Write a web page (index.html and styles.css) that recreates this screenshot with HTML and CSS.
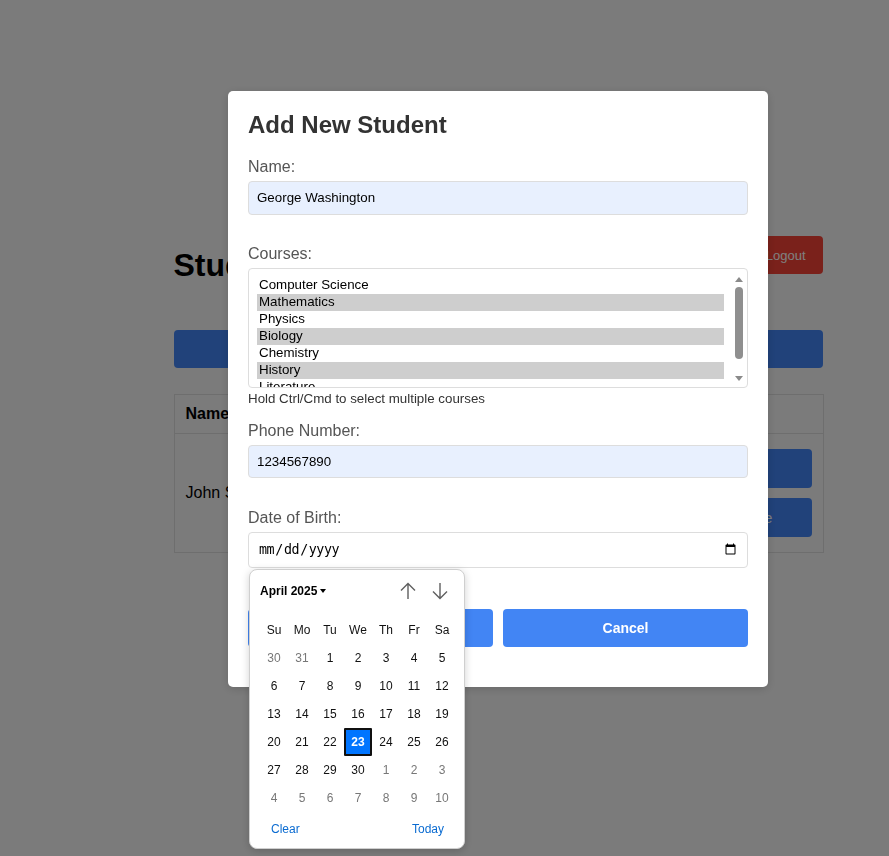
FILE: index.html
```html
<!DOCTYPE html>
<html lang="en">
<head>
<meta charset="utf-8">
<title>Student Management</title>
<link rel="stylesheet" href="styles.css">
</head>
<body>
<div class="page">
  <div class="container">
    <header class="top">
      <h1>Student Management</h1>
      <button class="btn-logout">Logout</button>
    </header>
    <button class="btn-add">Add New Student</button>
    <table class="students">
      <colgroup>
        <col class="c-name"><col class="c-email"><col class="c-courses"><col class="c-phone"><col class="c-dob"><col class="c-actions">
      </colgroup>
      <thead>
        <tr><th>Name</th><th>Email</th><th>Courses</th><th>Phone</th><th>DOB</th><th class="col-actions">Actions</th></tr>
      </thead>
      <tbody>
        <tr>
          <td>John Smith</td><td>john@mail.com</td><td>Physics</td><td>555123</td><td>2001</td>
          <td class="col-actions"><button class="btn-row">Edit</button><button class="btn-row">Delete</button></td>
        </tr>
      </tbody>
    </table>
  </div>
</div>

<div class="overlay">
  <div class="modal">
    <h2>Add New Student</h2>
    <div class="form-group">
      <label>Name:</label>
      <input class="field filled" type="text" value="George Washington">
    </div>
    <div class="form-group">
      <label>Courses:</label>
      <div class="listbox" role="listbox" aria-multiselectable="true">
        <div class="options">
          <div class="opt">Computer Science</div>
          <div class="opt sel">Mathematics</div>
          <div class="opt">Physics</div>
          <div class="opt sel">Biology</div>
          <div class="opt">Chemistry</div>
          <div class="opt sel">History</div>
          <div class="opt">Literature</div>
          <div class="opt">Art</div>
          <div class="opt">Music</div>
        </div>
        <div class="scrollbar">
          <span class="arrow-up"></span>
          <span class="thumb"></span>
          <span class="arrow-down"></span>
        </div>
      </div>
      <small class="hint">Hold Ctrl/Cmd to select multiple courses</small>
    </div>
    <div class="form-group group-phone">
      <label>Phone Number:</label>
      <input class="field filled" type="text" value="1234567890">
    </div>
    <div class="form-group">
      <label>Date of Birth:</label>
      <div class="date-wrap">
        <input class="field date" type="date">
        <div class="picker">
          <div class="picker-head">
            <span class="month">April 2025 <span class="caret"></span></span>
            <span class="nav">
              <svg width="24" height="20" viewBox="0 0 24 20"><path d="M12 2.5V18M5 9.5L12 2.5L19 9.5" fill="none" stroke="#5f5f5f" stroke-width="1.4"/></svg>
              <svg width="24" height="20" viewBox="0 0 24 20"><path d="M12 2V17.5M5 10.5L12 17.5L19 10.5" fill="none" stroke="#5f5f5f" stroke-width="1.4"/></svg>
            </span>
          </div>
          <div class="grid">
            <span class="dn">Su</span><span class="dn">Mo</span><span class="dn">Tu</span><span class="dn">We</span><span class="dn">Th</span><span class="dn">Fr</span><span class="dn">Sa</span>
            <span class="o">30</span><span class="o">31</span><span>1</span><span>2</span><span>3</span><span>4</span><span>5</span>
            <span>6</span><span>7</span><span>8</span><span>9</span><span>10</span><span>11</span><span>12</span>
            <span>13</span><span>14</span><span>15</span><span>16</span><span>17</span><span>18</span><span>19</span>
            <span>20</span><span>21</span><span>22</span><span class="sel">23</span><span>24</span><span>25</span><span>26</span>
            <span>27</span><span>28</span><span>29</span><span>30</span><span class="o">1</span><span class="o">2</span><span class="o">3</span>
            <span class="o">4</span><span class="o">5</span><span class="o">6</span><span class="o">7</span><span class="o">8</span><span class="o">9</span><span class="o">10</span>
          </div>
          <div class="picker-foot">
            <span class="link">Clear</span>
            <span class="link">Today</span>
          </div>
        </div>
      </div>
    </div>
    <div class="form-actions">
      <button class="btn-primary">Add Student</button>
      <button class="btn-primary">Cancel</button>
    </div>
  </div>
</div>
</body>
</html>
```
FILE: styles.css
```css
* { box-sizing: border-box; }

body {
  margin: 0;
  background: #f6f6f6;
  font-family: "Liberation Sans", Arial, sans-serif;
  color: #000;
}

.page {
  padding-left: 107px;
}

.container {
  width: 649px;
  margin: 0 auto;
  padding-top: 225px;
}

.top {
  display: flex;
  justify-content: space-between;
  align-items: flex-start;
}

.top h1 {
  font-size: 32px;
  margin: 21.5px 0;
  white-space: nowrap;
}

.btn-logout {
  margin-top: 11px;
  height: 38px;
  padding: 0 17px 0 40px;
  background: #f44336;
  color: #fff;
  border: none;
  border-radius: 4px;
  font-family: "Liberation Sans", Arial, sans-serif;
  font-size: 13px;
}

.btn-add {
  display: block;
  width: 100%;
  height: 38px;
  margin-top: 25px;
  background: #4285f4;
  color: #fff;
  border: none;
  border-radius: 4px;
  font-family: "Liberation Sans", Arial, sans-serif;
  font-size: 14px;
}

.students {
  width: 649px;
  table-layout: fixed;
  margin-top: 26px;
  border-collapse: collapse;
  border: 1px solid #ddd;
  font-size: 16px;
}

.c-name { width: 110px; }
.c-email { width: 140px; }
.c-courses { width: 110px; }
.c-phone { width: 80px; }
.c-dob { width: 67px; }
.c-actions { width: 142px; }

.students th,
.students td {
  text-align: left;
  border-bottom: 1px solid #ddd;
  padding: 10px 11px;
  white-space: nowrap;
  overflow: hidden;
}

.students td {
  padding: 15px 11px;
}

.btn-row {
  display: block;
  width: 120px;
  height: 39px;
  margin-left: auto;
  background: #4285f4;
  color: #fff;
  border: none;
  border-radius: 4px;
  font-family: "Liberation Sans", Arial, sans-serif;
  font-size: 14px;
}

.btn-row + .btn-row {
  margin-top: 10px;
}

/* overlay + modal */
.overlay {
  position: fixed;
  inset: 0;
  background: rgba(0, 0, 0, 0.5);
  display: flex;
  justify-content: center;
  align-items: flex-start;
  padding-top: 91px;
  padding-left: 107px;
}

.modal {
  width: 540px;
  background: #fff;
  border-radius: 5px;
  padding: 20px;
  box-shadow: 0 2px 10px rgba(0, 0, 0, 0.15);
}

.modal h2 {
  margin: 0 0 19px;
  font-size: 24px;
  color: #333;
}

.form-group {
  display: flow-root;
  margin-bottom: 15px;
}

.form-group.group-phone {
  margin-bottom: 16px;
}

.form-group label {
  display: block;
  margin-bottom: 5px;
  font-size: 16px;
  color: #555;
}

.field {
  display: block;
  width: 100%;
  margin: 0 0 15px;
  padding: 8px;
  border: 1px solid #ddd;
  border-radius: 4px;
  font-family: "Liberation Sans", Arial, sans-serif;
  font-size: 13.333px;
  color: #000;
  background: #fff;
}

.field.filled {
  background: #e8f0fe;
  height: 33.5px;
}

.field.date {
  font-family: "DejaVu Sans Mono", monospace;
  height: 36px;
  padding: 8px 8px 8px 9px;
  letter-spacing: -0.4px;
}

/* custom multi-select listbox */
.listbox {
  display: flex;
  height: 120px;
  border: 1px solid #ddd;
  border-radius: 4px;
  background: #fff;
  overflow: hidden;
}

.options {
  flex: 1;
  padding: 8px 8px 0;
  overflow: hidden;
  font-size: 13.333px;
  color: #000;
}

.opt {
  height: 17px;
  line-height: 16px;
  padding: 0 2px 1px;
  white-space: nowrap;
}

.opt.sel {
  background: #cecece;
}

.scrollbar {
  width: 15px;
  display: flex;
  flex-direction: column;
  align-items: center;
  padding: 8px 1px 0 0;
}

.arrow-up,
.arrow-down {
  width: 0;
  height: 0;
  border-left: 4px solid transparent;
  border-right: 4px solid transparent;
}

.arrow-up {
  border-bottom: 5px solid #8a8a8a;
}

.arrow-down {
  margin-top: 17px;
  border-top: 5px solid #8a8a8a;
}

.thumb {
  width: 8px;
  height: 72px;
  margin-top: 5px;
  border-radius: 4px;
  background: #8f8f8f;
}

.hint {
  display: block;
  margin-top: 3px;
  padding-bottom: 1px;
  font-size: 13.333px;
  color: #333;
}

.date-wrap {
  position: relative;
}

.picker {
  position: absolute;
  left: 1px;
  top: 37px;
  width: 216px;
  height: 280px;
  padding: 10px;
  background: #fff;
  border: 1px solid #cfcfcf;
  border-radius: 8px;
  box-shadow: 0 2px 8px rgba(0, 0, 0, 0.18);
  font-family: "Liberation Sans", Arial, sans-serif;
  z-index: 2;
}

.picker-head {
  display: flex;
  justify-content: space-between;
  align-items: center;
  height: 24px;
  margin: -1px 2px 13px 0;
}

.month {
  font-size: 12px;
  font-weight: bold;
  color: #000;
  display: flex;
  align-items: center;
  gap: 3px;
}

.caret {
  width: 0;
  height: 0;
  border-left: 3.5px solid transparent;
  border-right: 3.5px solid transparent;
  border-top: 4px solid #000;
}

.nav {
  display: flex;
  gap: 8px;
}

.nav svg {
  display: block;
}

.grid {
  display: grid;
  grid-template-columns: repeat(7, 28px);
  grid-auto-rows: 28px;
}

.grid span {
  display: flex;
  align-items: center;
  justify-content: center;
  font-size: 12px;
  color: #111;
}

.grid span.o {
  color: #777;
}

.grid span.sel {
  background: #0075ff;
  color: #fff;
  font-weight: bold;
  border: 2px solid #101010;
  border-radius: 1px;
}

.picker-foot {
  display: flex;
  justify-content: space-between;
  padding: 5px 10px 0 11px;
  height: 28px;
  align-items: center;
}

.link {
  font-size: 12px;
  color: #0a6bd1;
}

.form-actions {
  display: flex;
  gap: 10px;
  margin: 26px 0 20px;
}

.btn-primary {
  flex: 1;
  height: 38px;
  background: #4285f4;
  color: #fff;
  border: none;
  border-radius: 4px;
  font-family: "Liberation Sans", Arial, sans-serif;
  font-size: 14px;
  font-weight: bold;
}
```
